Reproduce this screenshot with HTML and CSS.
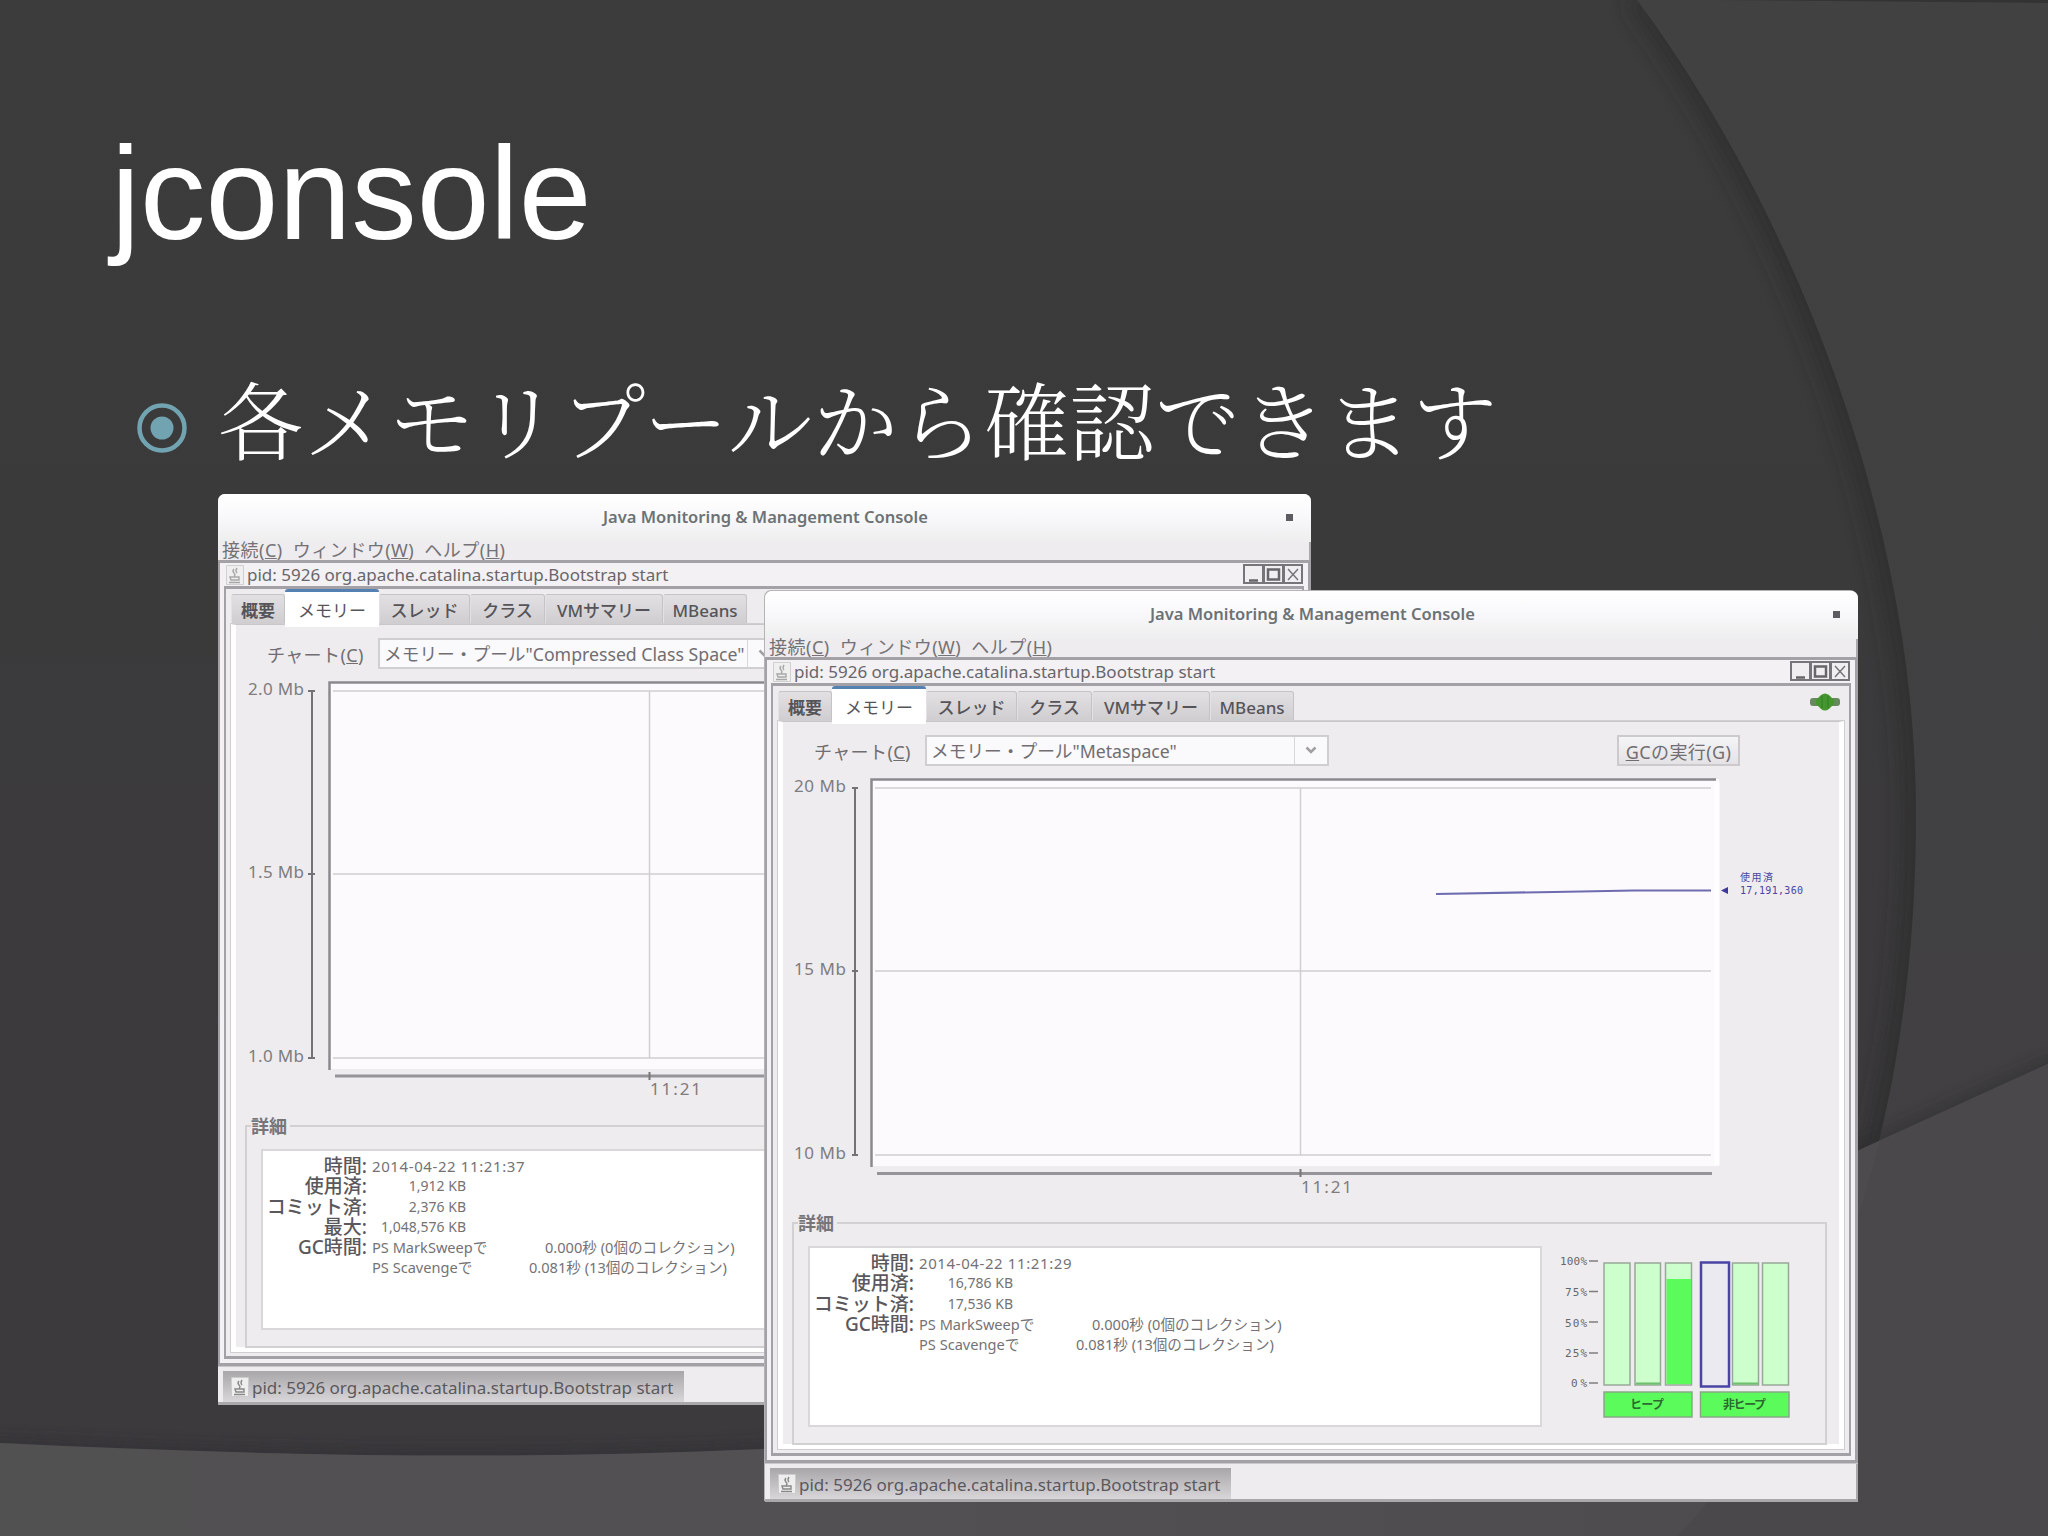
FILE: index.html
```html
<!DOCTYPE html>
<html lang="ja">
<head>
<meta charset="utf-8">
<title>jconsole</title>
<link rel="stylesheet" href="styles.css">
</head>
<body>
<main class="slide">
  <svg class="backdrop" viewBox="0 0 2048 1536" aria-hidden="true">
    <defs>
      <linearGradient id="base" x1="0" y1="0" x2="0" y2="1">
        <stop offset="0" stop-color="#3c3c3c"/><stop offset=".35" stop-color="#3b3a3b"/><stop offset="1" stop-color="#3c3a3d"/>
      </linearGradient>
      <linearGradient id="side" x1="0" y1="0" x2="0" y2="1">
        <stop offset="0" stop-color="#414141"/><stop offset="1" stop-color="#413f42"/>
      </linearGradient>
      <linearGradient id="floor" x1="0" y1="0" x2="1" y2="0">
        <stop offset="0" stop-color="#525152"/><stop offset=".4" stop-color="#525052"/><stop offset="1" stop-color="#4c4a4d"/>
      </linearGradient>
      <filter id="soft" x="-10%" y="-10%" width="120%" height="120%"><feGaussianBlur stdDeviation="11"/></filter>
      <filter id="soft2" x="-10%" y="-10%" width="120%" height="120%"><feGaussianBlur stdDeviation="7"/></filter>
      <clipPath id="inside"><path d="M0 0H1637C1793 210 1916 520 1916 815C1916 1100 1840 1360 1678 1536H0Z"/></clipPath>
      <clipPath id="above"><path d="M0 0H2048V1064L1859 1150C1500 1320 1100 1440 765 1449C500 1461 250 1455 0 1443Z"/></clipPath>
    </defs>
    <rect width="2048" height="1536" fill="url(#side)"/>
    <path d="M0 0H1637C1793 210 1916 520 1916 815C1916 1100 1840 1360 1678 1536H0Z" fill="url(#base)"/>
    <g clip-path="url(#inside)">
      <path d="M1637 -4C1793 210 1916 520 1916 815C1916 1100 1840 1360 1678 1536" fill="none" stroke="#2a292b" stroke-width="22" opacity=".75" filter="url(#soft)"/>
    </g>
    <g clip-path="url(#above)">
      <path d="M2058 1060L1859 1150C1500 1320 1100 1440 765 1449C500 1461 250 1455 -10 1443" fill="none" stroke="#2c2b2d" stroke-width="10" opacity=".6" filter="url(#soft2)"/>
    </g>
    <path d="M2048 1064L1859 1150C1500 1320 1100 1440 765 1449C500 1461 250 1455 0 1443V1536H2048Z" fill="url(#floor)"/>
    <path d="M1880 1141C1840 1290 1790 1415 1678 1536H2048V1064Z" fill="#4a484b"/>
    <path d="M1720 0H2048V3Z" fill="#333"/>
  </svg>

  <h1 class="title">jconsole</h1>
  <p class="point">
    <svg class="bullet" viewBox="0 0 50 50"><circle cx="25" cy="25" r="22.500" fill="none" stroke="#72a3b0" stroke-width="4.500"/><circle cx="25" cy="25" r="11.500" fill="#72a3b0"/></svg>
    <span>各メモリプールから確認できます</span>
  </p>

  <section class="window window-back">
    <header class="titlebar"><span>Java Monitoring &amp; Management Console</span><i class="dot"></i></header>
    <nav class="menubar"><span>接続(<u>C</u>)</span><span>ウィンドウ(<u>W</u>)</span><span>ヘルプ(<u>H</u>)</span></nav>
    <div class="frame">
      <div class="frame-title">
        <svg class="cup faint" viewBox="0 0 18 20"><path d="M.5 .5H17.500V19.500H.5Z" fill="#eee" stroke="#bbb"/><path d="M8 4Q6 6 8 8T8 11M11 3Q9 6 11 8M4 12H13V15H5ZM3 17.500H14" fill="none" stroke="#777" stroke-width="1.400"/></svg>
        <span class="pid">pid: 5926 org.apache.catalina.startup.Bootstrap start</span>
        <svg class="controls" viewBox="0 0 60 20"><path d="M1 1H20V19H1ZM21 1H40V19H21ZM41 1H59V19H41Z" fill="#f0eef0" stroke="#77757a" stroke-width="2"/><path d="M6 16.500H15M25 5.500H36V15.500H25Z" fill="none" stroke="#68666a" stroke-width="2.500"/><path d="M45 5L55 16M55 5L45 16" stroke="#77757a" stroke-width="1.500"/></svg>
      </div>
      <div class="body">
        <div class="tabs"><span class="tab t1">概要</span><span class="tab t2 active">メモリー</span><span class="tab t3">スレッド</span><span class="tab t4">クラス</span><span class="tab t5">VMサマリー</span><span class="tab t6">MBeans</span></div>
        <div class="panel">
          <div class="toolbar"><label>チャート(<u>C</u>)</label><div class="combo"><span>メモリー・プール"Compressed Class Space"</span><i><svg viewBox="0 0 12 8"><path d="M1.500 1.500L6 6L10.500 1.500" fill="none" stroke="#a19fa3" stroke-width="2.500"/></svg></i></div></div>
          <svg class="chart" viewBox="19 180 1058 440">
            <rect x="112" y="189" width="844" height="387" fill="#fcfafd"/>
            <path d="M112.500 577V189.500H950" fill="none" stroke="#8b898d" stroke-width="2.500"/>
            <path d="M118 583H950" stroke="#969498" stroke-width="3"/>
            <path d="M116 198H948M116 381H948M116 565H948M432.500 198V565" stroke="#d0ced1" stroke-width="1.500" fill="none"/>
            <path d="M432.500 579V587" stroke="#777" stroke-width="2"/>
            <path d="M91 198H98M91 381H98M91 565H98M95 198V565" stroke="#747276" stroke-width="2" fill="none"/>
            <g class="axis"><text x="31" y="202" textLength="56">2.0 Mb</text><text x="31" y="385" textLength="56">1.5 Mb</text><text x="31" y="569" textLength="56">1.0 Mb</text><text x="433" y="602" textLength="51">11:21</text></g>
          </svg>
          <fieldset class="details"><legend>詳細</legend>
            <div class="facts">
              <b>時間:</b><span class="date">2014-04-22 11:21:37</span>
              <b>使用済:</b><span class="kb">1,912 KB</span>
              <b>コミット済:</b><span class="kb">2,376 KB</span>
              <b>最大:</b><span class="kb">1,048,576 KB</span>
              <b>GC時間:</b><span class="gc"><em>PS MarkSweepで</em><em class="g1">0.000秒 (0個のコレクション)</em></span>
              <b></b><span class="gc"><em>PS Scavengeで</em><em class="g2">0.081秒 (13個のコレクション)</em></span>
            </div>
          </fieldset>
        </div>
      </div>
    </div>
    <footer class="taskbar"><div class="task"><svg class="cup" viewBox="0 0 18 20"><path d="M.5 .5H17.500V19.500H.5Z" fill="#eee" stroke="#ccc"/><path d="M8 4Q6 6 8 8T8 11M11 3Q9 6 11 8M4 12H13V15H5ZM3 17.500H14" fill="none" stroke="#888" stroke-width="1.400"/></svg><span class="pid">pid: 5926 org.apache.catalina.startup.Bootstrap start</span></div></footer>
  </section>

  <section class="window window-front">
    <header class="titlebar"><span>Java Monitoring &amp; Management Console</span><i class="dot"></i></header>
    <nav class="menubar"><span>接続(<u>C</u>)</span><span>ウィンドウ(<u>W</u>)</span><span>ヘルプ(<u>H</u>)</span></nav>
    <div class="frame">
      <div class="frame-title">
        <svg class="cup faint" viewBox="0 0 18 20"><path d="M.5 .5H17.500V19.500H.5Z" fill="#eee" stroke="#bbb"/><path d="M8 4Q6 6 8 8T8 11M11 3Q9 6 11 8M4 12H13V15H5ZM3 17.500H14" fill="none" stroke="#777" stroke-width="1.400"/></svg>
        <span class="pid">pid: 5926 org.apache.catalina.startup.Bootstrap start</span>
        <svg class="controls" viewBox="0 0 60 20"><path d="M1 1H20V19H1ZM21 1H40V19H21ZM41 1H59V19H41Z" fill="#f0eef0" stroke="#77757a" stroke-width="2"/><path d="M6 16.500H15M25 5.500H36V15.500H25Z" fill="none" stroke="#68666a" stroke-width="2.500"/><path d="M45 5L55 16M55 5L45 16" stroke="#77757a" stroke-width="1.500"/></svg>
      </div>
      <div class="body">
        <div class="tabs"><span class="tab t1">概要</span><span class="tab t2 active">メモリー</span><span class="tab t3">スレッド</span><span class="tab t4">クラス</span><span class="tab t5">VMサマリー</span><span class="tab t6">MBeans</span>
          <svg class="plug" viewBox="0 0 30 18"><rect x="0" y="5" width="30" height="8" rx="3" fill="#668a5e"/><path d="M6 7L11 2Q15 -1 19 2L24 7V11L19 16Q15 19 11 16L6 11Z" fill="#46962f"/><path d="M12 3V15M18 3V15" stroke="#37842a" stroke-width="1.500"/></svg>
        </div>
        <div class="panel">
          <div class="toolbar"><label>チャート(<u>C</u>)</label><div class="combo"><span>メモリー・プール"Metaspace"</span><i><svg viewBox="0 0 12 8"><path d="M1.500 1.500L6 6L10.500 1.500" fill="none" stroke="#a19fa3" stroke-width="2.500"/></svg></i></div><div class="gc-button"><u>G</u>Cの実行(G)</div></div>
          <svg class="chart" viewBox="19 180 1058 440">
            <rect x="107" y="189" width="848" height="387" fill="#fcfafd"/>
            <path d="M953 192V575" stroke="#fff" stroke-width="5"/>
            <path d="M107.500 577V189.500H952" fill="none" stroke="#8b898d" stroke-width="2.500"/>
            <path d="M113 583.500H948" stroke="#969498" stroke-width="3"/>
            <path d="M111 198H947M111 381H947M111 565H947M536.500 198V565" stroke="#d0ced1" stroke-width="1.500" fill="none"/>
            <path d="M536.500 579V587" stroke="#777" stroke-width="2"/>
            <path d="M88 198H94M88 381H94M88 565H94M91 198V565" stroke="#747276" stroke-width="2" fill="none"/>
            <path d="M672 304L790 302L870 300.500H947" fill="none" stroke="#6f6bb0" stroke-width="2.200"/>
            <path d="M957 300.500L964 297V304Z" fill="#3d389c"/>
            <g class="axis"><text x="30" y="202" textLength="52">20 Mb</text><text x="30" y="385" textLength="52">15 Mb</text><text x="30" y="569" textLength="52">10 Mb</text><text x="537" y="603" textLength="51">11:21</text></g>
            <g class="series"><text x="976" y="291" textLength="33">使用済</text><text x="976" y="304" textLength="63">17,191,360</text></g>
          </svg>
          <fieldset class="details"><legend>詳細</legend>
            <div class="facts">
              <b>時間:</b><span class="date">2014-04-22 11:21:29</span>
              <b>使用済:</b><span class="kb">16,786 KB</span>
              <b>コミット済:</b><span class="kb">17,536 KB</span>
              <b>GC時間:</b><span class="gc"><em>PS MarkSweepで</em><em class="g1">0.000秒 (0個のコレクション)</em></span>
              <b></b><span class="gc"><em>PS Scavengeで</em><em class="g2">0.081秒 (13個のコレクション)</em></span>
            </div>
            <svg class="pools" viewBox="0 0 260 180">
              <g class="percent"><text x="18" y="18.500" textLength="27">100%</text><text x="23" y="49.500" textLength="22">75%</text><text x="23" y="80.500" textLength="22">50%</text><text x="23" y="110.500" textLength="22">25%</text><text x="29" y="141" textLength="16">0%</text></g>
              <path d="M47 15H56M47 45.500H56M47 76H56M47 107H56M47 137H56" stroke="#807e82" stroke-width="1.500"/>
              <g fill="#cfc" stroke="#98a898" stroke-width="1.500"><rect x="62" y="17" width="26" height="122"/><rect x="93" y="17" width="25.500" height="122"/><rect x="123.500" y="17" width="26" height="122"/><rect x="190.500" y="17" width="26" height="122"/><rect x="220.500" y="17" width="26" height="122"/></g>
              <rect x="124.500" y="33" width="24.500" height="105" fill="#5cfb5c"/>
              <path d="M94 137.500H118M191 137.500H216" stroke="#6fc06f" stroke-width="2"/>
              <rect x="159" y="16.500" width="28" height="124" fill="#ebeaf0" stroke="#4a45a4" stroke-width="2.500"/>
              <g fill="#5cfb5c" stroke="#86a886" stroke-width="1.500"><rect x="62" y="146" width="88" height="25"/><rect x="158.500" y="146" width="88.500" height="25"/></g>
              <g class="pool-name"><text x="88" y="163" textLength="34">ヒープ</text><text x="181" y="163" textLength="43">非ヒープ</text></g>
            </svg>
          </fieldset>
        </div>
      </div>
    </div>
    <footer class="taskbar"><div class="task"><svg class="cup" viewBox="0 0 18 20"><path d="M.5 .5H17.500V19.500H.5Z" fill="#eee" stroke="#ccc"/><path d="M8 4Q6 6 8 8T8 11M11 3Q9 6 11 8M4 12H13V15H5ZM3 17.500H14" fill="none" stroke="#888" stroke-width="1.400"/></svg><span class="pid">pid: 5926 org.apache.catalina.startup.Bootstrap start</span></div></footer>
  </section>
</main>
</body>
</html>
```
FILE: styles.css
```css
* { box-sizing: border-box; }
body { margin: 0; font-family: "Noto Sans", "Noto Sans CJK JP", sans-serif; color: #5c5a5e; }
.slide { position: relative; width: 2048px; height: 1536px; overflow: hidden; padding: 119px 0 0 111px; background: #3c3b3c; }
.backdrop { position: absolute; inset: 0; width: 2048px; height: 1536px; }
.title { position: relative; margin: 0; font: 400 131px/150px "Liberation Sans", sans-serif; color: #fff; }
.point { position: relative; display: flex; align-items: center; gap: 31px; margin: 83px 0 0 26px; height: 130px; font: 300 85px/130px "Noto Serif CJK JP", "Noto Sans CJK JP", serif; letter-spacing: .6px; color: #fff; }
.bullet { width: 50px; height: 50px; margin-top: 21px; }

/* console windows */
.window { position: absolute; width: 1093px; height: 911px; display: flex; flex-direction: column; background: #eeecee; border-radius: 7px 7px 0 0; overflow: hidden; white-space: nowrap; box-shadow: inset -2px -3px 0 #aaa8ab; }
.window-back { left: 218px; top: 494px; }
.window-front { left: 765px; top: 591px; box-shadow: inset -2px -3px 0 #aaa8ab, -1px -1px 0 #b5b3b6; }
.titlebar { height: 48px; display: flex; align-items: center; background: linear-gradient(#fff, #f9f9fb 45%, #eeeeef); font: 600 16.500px/44px "Noto Sans", sans-serif; color: #6c7275; }
.titlebar span { width: 325px; margin: -3px 358px 0 385px; }
.titlebar .dot { width: 7px; height: 7px; margin-top: -2px; background: #5d5c60; flex: none; }
.menubar { height: 18px; display: flex; gap: 10px; padding-left: 4px; font-size: 18px; line-height: 17px; letter-spacing: .5px; color: #747276; }
.frame { height: 806px; border: 3px solid #a3a1a5; border-width: 3px 3px 3px 2px; padding: 0 4px 4px; background: #f3f1f3; }
.frame-title { display: flex; align-items: center; height: 23px; font-size: 17px; line-height: 24px; color: #68666a; padding-left: 2px; }
.cup { width: 18px; height: 20px; flex: none; }
.faint { opacity: .6; }
.frame-title .pid { margin: 1px 0 0 3px; }
.pid { width: 423px; }
.controls { width: 60px; height: 20px; margin-left: 573px; margin-top: -2px; }
.body { height: 773px; border: 3px solid #a3a1a5; border-width: 3px 2px 3px 2px; padding: 0 5px 4px; background: #eeecee; }
.tabs { height: 35px; display: flex; align-items: flex-end; }
.tab { height: 30px; border: 1px solid #c5c3c6; border-bottom: 0; border-left-color: #e3e1e4; border-radius: 3px 3px 0 0; background: linear-gradient(#e2e0e3, #cfcdd0); text-align: center; font-size: 17px; line-height: 32px; font-weight: 500; color: #565458; }
.active { position: relative; height: 38px; margin-bottom: -3px; margin-top: -6px; background: #fff; border: 0; border-top: 3px solid #5580b2; line-height: 38px; font-weight: 400; }
.t1 { width: 54px; font-weight: 700; } .t2 { width: 94px; } .t3 { width: 91px; } .t4 { width: 75px; } .t5 { width: 118px; } .t6 { width: 84px; }
.plug { width: 30px; height: 18px; margin: 0 0 10px 516px; }
.panel { height: 728px; border: 5px solid #fff; border-width: 1px 5px 5px; border-top-color: #c9c7ca; outline: 1px solid #d0ced1; padding: 12px 9px 0; }
.toolbar { display: flex; align-items: center; height: 32px; padding-left: 22px; font-size: 18px; color: #706e72; }
.toolbar label { width: 111px; letter-spacing: .4px; padding-top: 2px; }
.combo { display: flex; align-items: center; width: 404px; height: 31px; border: 2px solid #d0ced1; background: #faf9fb; }
.combo span { width: 368px; padding: 2px 0 0 4px; border-right: 1px solid #d9d7da; font-size: 17.700px; line-height: 25px; }
.combo i { flex: 1; display: flex; justify-content: center; }
.combo svg { width: 12px; height: 8px; }
.gc-button { width: 123px; height: 31px; margin-left: 288px; border: 2px solid #cccacd; background: linear-gradient(#f5f4f6, #e4e2e5); text-align: center; letter-spacing: .4px; line-height: 30px; }
.chart { display: block; width: 1058px; height: 440px; margin: 4px -9px 0; }
.axis text { font-size: 17px; fill: #7e7c80; }
.series text { font: 10px "DejaVu Sans Mono", "Noto Sans CJK JP", monospace; fill: #4a45a4; }
.details { margin: 3px 3px 0 0; height: 232px; padding: 13px 0 0; border: 2px solid #d2d0d3; display: flex; min-width: 0; }
.details legend { margin-left: 4px; padding: 0 3px 0 0; font-size: 18px; line-height: 20px; font-weight: 600; color: #77757a; }
.facts { flex: none; width: 734px; height: 181px; margin-left: 14px; background: #fff; border: 2px solid #d9d7da; padding-top: 5px; display: grid; grid-template-columns: 104px 1fr; column-gap: 5px; grid-auto-rows: 20.300px; line-height: 20px; font-size: 14.600px; align-content: start; color: #747276; }
.facts b { direction: ltr; display: flex; justify-content: flex-end; font-size: 19px; font-weight: 500; color: #5a585c; }
.facts .date { font-size: 15px; letter-spacing: .6px; }
.kb { width: 94px; text-align: right; font-size: 14px; }
.gc { display: flex; }
.gc em { font-style: normal; width: 173px; }
.gc .g1 { width: auto; } .gc .g2 { width: auto; margin-left: -16px; }
.pools { flex: none; width: 260px; height: 180px; }
.percent text { font: 11px "DejaVu Sans Mono", monospace; fill: #68666a; }
.pool-name text { font: 600 12px "Noto Sans CJK JP", sans-serif; fill: #2c6a30; }
.taskbar { height: 39px; border-top: 1px solid #c9c7ca; padding: 4px 0 0 5px; }
.task { display: flex; align-items: center; gap: 3px; width: 461px; height: 31px; padding: 0 0 0 8px; background: linear-gradient(#a8a6a9, #d8d6d9); font-size: 17px; color: #5a585c; }
.task .pid { padding-top: 2px; }
```
